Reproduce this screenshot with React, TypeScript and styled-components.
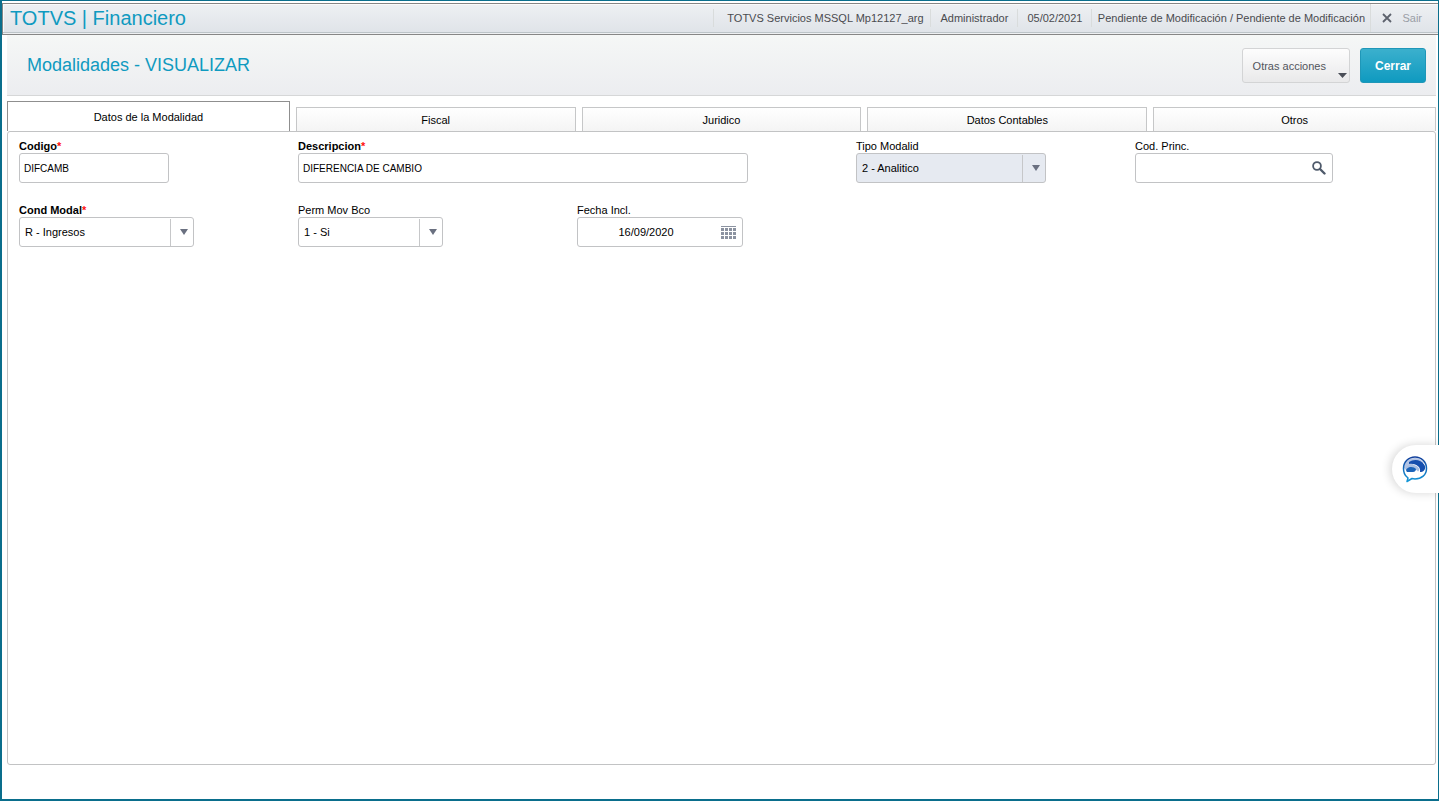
import React from 'react';
import styled, { createGlobalStyle, css } from 'styled-components';

const GlobalStyle = createGlobalStyle`
  *, *::before, *::after { box-sizing: border-box; }
  body {
    margin: 0;
    background: #fff;
    color: #000;
    font-family: "Liberation Sans", Arial, sans-serif;
    font-size: 11px;
    line-height: 14px;
  }
  button, input, select { font: inherit; color: inherit; margin: 0; }
`;

const Frame = styled.div`
  display: flex;
  flex-direction: column;
  min-height: 100vh;
  padding-top: 2px;
  border: 1px solid #0a6e8c;
  border-left-width: 2px;
  border-bottom-width: 2px;
  background: #fff;
`;

const TopBar = styled.header`
  display: flex;
  align-items: center;
  justify-content: space-between;
  height: 32px;
  padding: 0 0 2px 7px;
  border: 1px solid #868686;
  border-right: 0;
  background: linear-gradient(#eef0f3, #dfe3e8);
  box-shadow: inset 0 -1px #eef0f2, inset 0 -2px #bcc4c8, inset 1px 1px #fafafa;
`;

const Brand = styled.span`
  color: #0f9ac0;
  font-size: 20px;
  line-height: 24px;
`;

const Status = styled.div`
  display: flex;
  align-items: center;
  align-self: stretch;
  color: #4a4b4f;
`;

const StatusItem = styled.span<{ $width: number; $indent?: boolean }>`
  min-width: ${(p) => p.$width}px;
  padding: 2px 0 2px ${(p) => (p.$indent ? 6 : 0)}px;
  border-left: 1px solid #d9dcdc;
  text-align: center;
`;

const ExitButton = styled.button`
  display: flex;
  align-items: center;
  align-self: stretch;
  gap: 10px;
  padding: 0 16px 0 11px;
  border: 0;
  border-left: 1px solid #d9dcdc;
  background: none;
  color: #9a9ea6;
`;

const Body = styled.div`
  display: flex;
  flex: 1;
  flex-direction: column;
  padding: 0 2px 34px 5px;
`;

const TitleBar = styled.div`
  display: flex;
  align-items: center;
  justify-content: space-between;
  height: 61px;
  padding: 0 10px 0 20px;
  border-bottom: 1px solid #d6d7d8;
  background: linear-gradient(#f5f7f6, #ecedf0);
`;

const Title = styled.h1`
  margin: 0;
  color: #0f9ac0;
  font-size: 18px;
  font-weight: 400;
  line-height: 22px;
`;

const Actions = styled.div`
  display: flex;
  gap: 10px;
`;

const ActionButton = styled.button<{ $primary?: boolean }>`
  display: flex;
  align-items: center;
  height: 35px;
  border: 1px solid #d3d4d5;
  border-radius: 3px;
  background: linear-gradient(#fdfdfd, #e9e9ea);
  color: #52555c;
  padding: 2px 2px 0 10px;
  gap: 12px;
  svg { align-self: flex-end; margin: 0 0 4px; }
  ${(p) =>
    p.$primary &&
    css`
      padding: 2px 14px 0;
      border-color: #1f97b8;
      background: linear-gradient(#3bb0cd, #0f9ac0);
      color: #fff;
      font-size: 12px;
      font-weight: 700;
    `}
`;

const Tabs = styled.div`
  display: grid;
  grid-template-columns: 283fr 280fr 280fr 280fr 283fr;
  align-items: end;
  gap: 6px;
  margin-top: 5px;
`;

const Tab = styled.button<{ $active?: boolean }>`
  height: ${(p) => (p.$active ? 30 : 24)}px;
  padding: ${(p) => (p.$active ? '1px 0 0' : '0')};
  border: 1px solid ${(p) => (p.$active ? '#8f8f8f' : '#c6c7c8')};
  border-bottom: 0;
  background: ${(p) => (p.$active ? '#fff' : 'linear-gradient(#fff, #f4f4f4)')};
`;

const Panel = styled.main`
  flex: 1;
  padding: 7px 21px 7px 11px;
  border: 1px solid #c2c3c4;
  border-radius: 3px;
`;

const Fields = styled.form`
  display: grid;
  grid-template-columns: repeat(5, 1fr);
  row-gap: 20px;
`;

const Field = styled.div<{ $span?: number }>`
  grid-column: span ${(p) => p.$span ?? 1};
`;

const Label = styled.label<{ $required?: boolean }>`
  display: block;
  height: 14px;
  white-space: nowrap;
  ${(p) =>
    p.$required &&
    css`
      font-weight: 700;
      &::after { content: '*'; color: #ff1010; }
    `}
`;

const Control = styled.div<{ $width: number; $shaded?: boolean }>`
  display: grid;
  align-items: center;
  width: ${(p) => p.$width}px;
  max-width: 100%;
  height: 30px;
  border: 1px solid #c2c3c5;
  border-radius: 3px;
  background: ${(p) => (p.$shaded ? '#e6eaf1' : '#fff')};
  overflow: hidden;
  > * { grid-area: 1 / 1; }
`;

const TextInput = styled.input<{ $date?: boolean }>`
  width: 100%;
  height: 28px;
  padding: 0 ${(p) => (p.$date ? 32 : 4)}px 0 4px;
  border: 0;
  outline: 0;
  background: none;
  font-size: ${(p) => (p.$date ? 11 : 10)}px;
  text-align: ${(p) => (p.$date ? 'center' : 'left')};
`;

const Select = styled.select`
  width: 100%;
  height: 28px;
  padding: 0 28px 0 5px;
  border: 0;
  outline: 0;
  appearance: none;
  background: none;
`;

const Arrow = styled.span`
  display: flex;
  align-items: center;
  justify-content: center;
  justify-self: end;
  align-self: end;
  width: 23px;
  height: 27px;
  padding: 0 0 1px 4px;
  border-left: 1px solid #c6c7c9;
  pointer-events: none;
`;

const IconButton = styled.button`
  display: flex;
  justify-self: end;
  margin-right: 6px;
  padding: 0;
  border: 0;
  background: none;
`;

const ChatButton = styled.button`
  position: fixed;
  top: 445px;
  right: 0;
  display: flex;
  align-items: center;
  width: 47px;
  height: 48px;
  padding: 0 0 0 10px;
  border: 0;
  border-radius: 24px 0 0 24px;
  background: #fff;
  box-shadow: -2px 0 10px rgba(0, 0, 0, 0.16);
`;

const Triangle = ({ w, h, fill }: { w: number; h: number; fill: string }) => (
  <svg width={w} height={h} viewBox="0 0 10 10" preserveAspectRatio="none" aria-hidden="true">
    <path d="M0 0H10L5 10Z" fill={fill} />
  </svg>
);

const CloseIcon = () => (
  <svg width="10" height="10" viewBox="0 0 10 10" aria-hidden="true">
    <path d="M1 1L9 9M9 1L1 9" stroke="#5d626d" strokeWidth="1.8" fill="none" />
  </svg>
);

const SearchIcon = () => (
  <svg width="14" height="14" viewBox="0 0 14 14" aria-hidden="true">
    <circle cx="5" cy="5" r="3.9" stroke="#4f5a6b" strokeWidth="1.8" fill="none" />
    <path d="M8 8L12.5 12.5" stroke="#4f5a6b" strokeWidth="2.4" strokeLinecap="round" />
  </svg>
);

const CalendarIcon = () => (
  <svg width="15" height="13" viewBox="0 0 15 13" fill="#8b92a0" aria-hidden="true">
    <rect width="15" height="1" />
    {[2, 6, 10].map((y) =>
      [0, 4, 8, 12].map((x) => <rect key={`${x}-${y}`} x={x} y={y} width="3" height="3" />)
    )}
  </svg>
);

const ChatIcon = () => (
  <svg width="26" height="28" viewBox="0 0 26 28" fill="none" aria-hidden="true">
    <defs>
      <linearGradient id="bubble" x1="0" y1="0" x2="0" y2="1">
        <stop offset="0" stopColor="#123f9c" />
        <stop offset="1" stopColor="#1498d8" />
      </linearGradient>
    </defs>
    <path d="M2 13C3 6 8 3 13 3C17 3 20 5 22 8L12 9L4 15Z" fill="#b3c4e4" />
    <path d="M7 7C12 3.500 19 4.500 22.500 10C23.500 12 23.500 14 22 15.500C21 16.500 19.500 17 18 17C19 12 14 8 7 9Z" fill="#164fae" />
    <path d="M4 12C8 8.500 15 9.500 17 13.500C17.500 15 17 16 16 16.500C13 13 8 13 4 16Z" fill="#a9bfe2" />
    <path d="M4.500 14C7 11 12 11.500 14 14C14 15.500 13 17 11 17H5C4 16 4 15 4.500 14Z" fill="#1b63b8" />
    <path
      d="M5 22C2.500 20 1.500 17 1.500 13.500C1.500 7 6.500 2 13 2S24.500 7 24.500 13.500S19.500 24 13 24L10 23.500L5 26.500L6 23Z"
      stroke="url(#bubble)"
      strokeWidth="1.500"
      strokeLinejoin="round"
    />
  </svg>
);

interface SelectFieldProps {
  id: string;
  label: string;
  value: string;
  width: number;
  required?: boolean;
  shaded?: boolean;
}

const SelectField = ({ id, label, value, width, required, shaded }: SelectFieldProps) => (
  <Field>
    <Label htmlFor={id} $required={required}>{label}</Label>
    <Control $width={width} $shaded={shaded}>
      <Select id={id} defaultValue={value}>
        <option value={value}>{value}</option>
      </Select>
      <Arrow><Triangle w={8} h={6} fill="#6a7080" /></Arrow>
    </Control>
  </Field>
);

const tabs = ['Datos de la Modalidad', 'Fiscal', 'Juridico', 'Datos Contables', 'Otros'];

export default function App() {
  return (
    <Frame>
      <GlobalStyle />
      <TopBar>
        <Brand>TOTVS | Financiero</Brand>
        <Status>
          <StatusItem $width={217} $indent>TOTVS Servicios MSSQL Mp12127_arg</StatusItem>
          <StatusItem $width={87}>Administrador</StatusItem>
          <StatusItem $width={74}>05/02/2021</StatusItem>
          <StatusItem $width={279}>Pendiente de Modificación / Pendiente de Modificación</StatusItem>
          <ExitButton type="button"><CloseIcon />Sair</ExitButton>
        </Status>
      </TopBar>
      <Body>
        <TitleBar>
          <Title>Modalidades - VISUALIZAR</Title>
          <Actions>
            <ActionButton type="button">
              Otras acciones
              <Triangle w={9} h={5} fill="#4a4e57" />
            </ActionButton>
            <ActionButton type="button" $primary>Cerrar</ActionButton>
          </Actions>
        </TitleBar>
        <Tabs role="tablist">
          {tabs.map((name, i) => (
            <Tab key={name} type="button" role="tab" aria-selected={i === 0} $active={i === 0}>
              {name}
            </Tab>
          ))}
        </Tabs>
        <Panel>
          <Fields>
            <Field>
              <Label htmlFor="codigo" $required>Codigo</Label>
              <Control $width={150}><TextInput id="codigo" defaultValue="DIFCAMB" /></Control>
            </Field>
            <Field $span={2}>
              <Label htmlFor="descripcion" $required>Descripcion</Label>
              <Control $width={450}>
                <TextInput id="descripcion" defaultValue="DIFERENCIA DE CAMBIO" />
              </Control>
            </Field>
            <SelectField id="tipo" label="Tipo Modalid" value="2 - Analitico" width={190} shaded />
            <Field>
              <Label htmlFor="princ">Cod. Princ.</Label>
              <Control $width={198}>
                <TextInput id="princ" />
                <IconButton type="button" aria-label="Buscar"><SearchIcon /></IconButton>
              </Control>
            </Field>
            <SelectField id="cond" label="Cond Modal" value="R - Ingresos" width={175} required />
            <SelectField id="perm" label="Perm Mov Bco" value="1 - Si" width={145} />
            <Field>
              <Label htmlFor="fecha">Fecha Incl.</Label>
              <Control $width={166}>
                <TextInput id="fecha" defaultValue="16/09/2020" $date />
                <IconButton type="button" aria-label="Calendario"><CalendarIcon /></IconButton>
              </Control>
            </Field>
          </Fields>
        </Panel>
      </Body>
      <ChatButton type="button" aria-label="Chat"><ChatIcon /></ChatButton>
    </Frame>
  );
}
